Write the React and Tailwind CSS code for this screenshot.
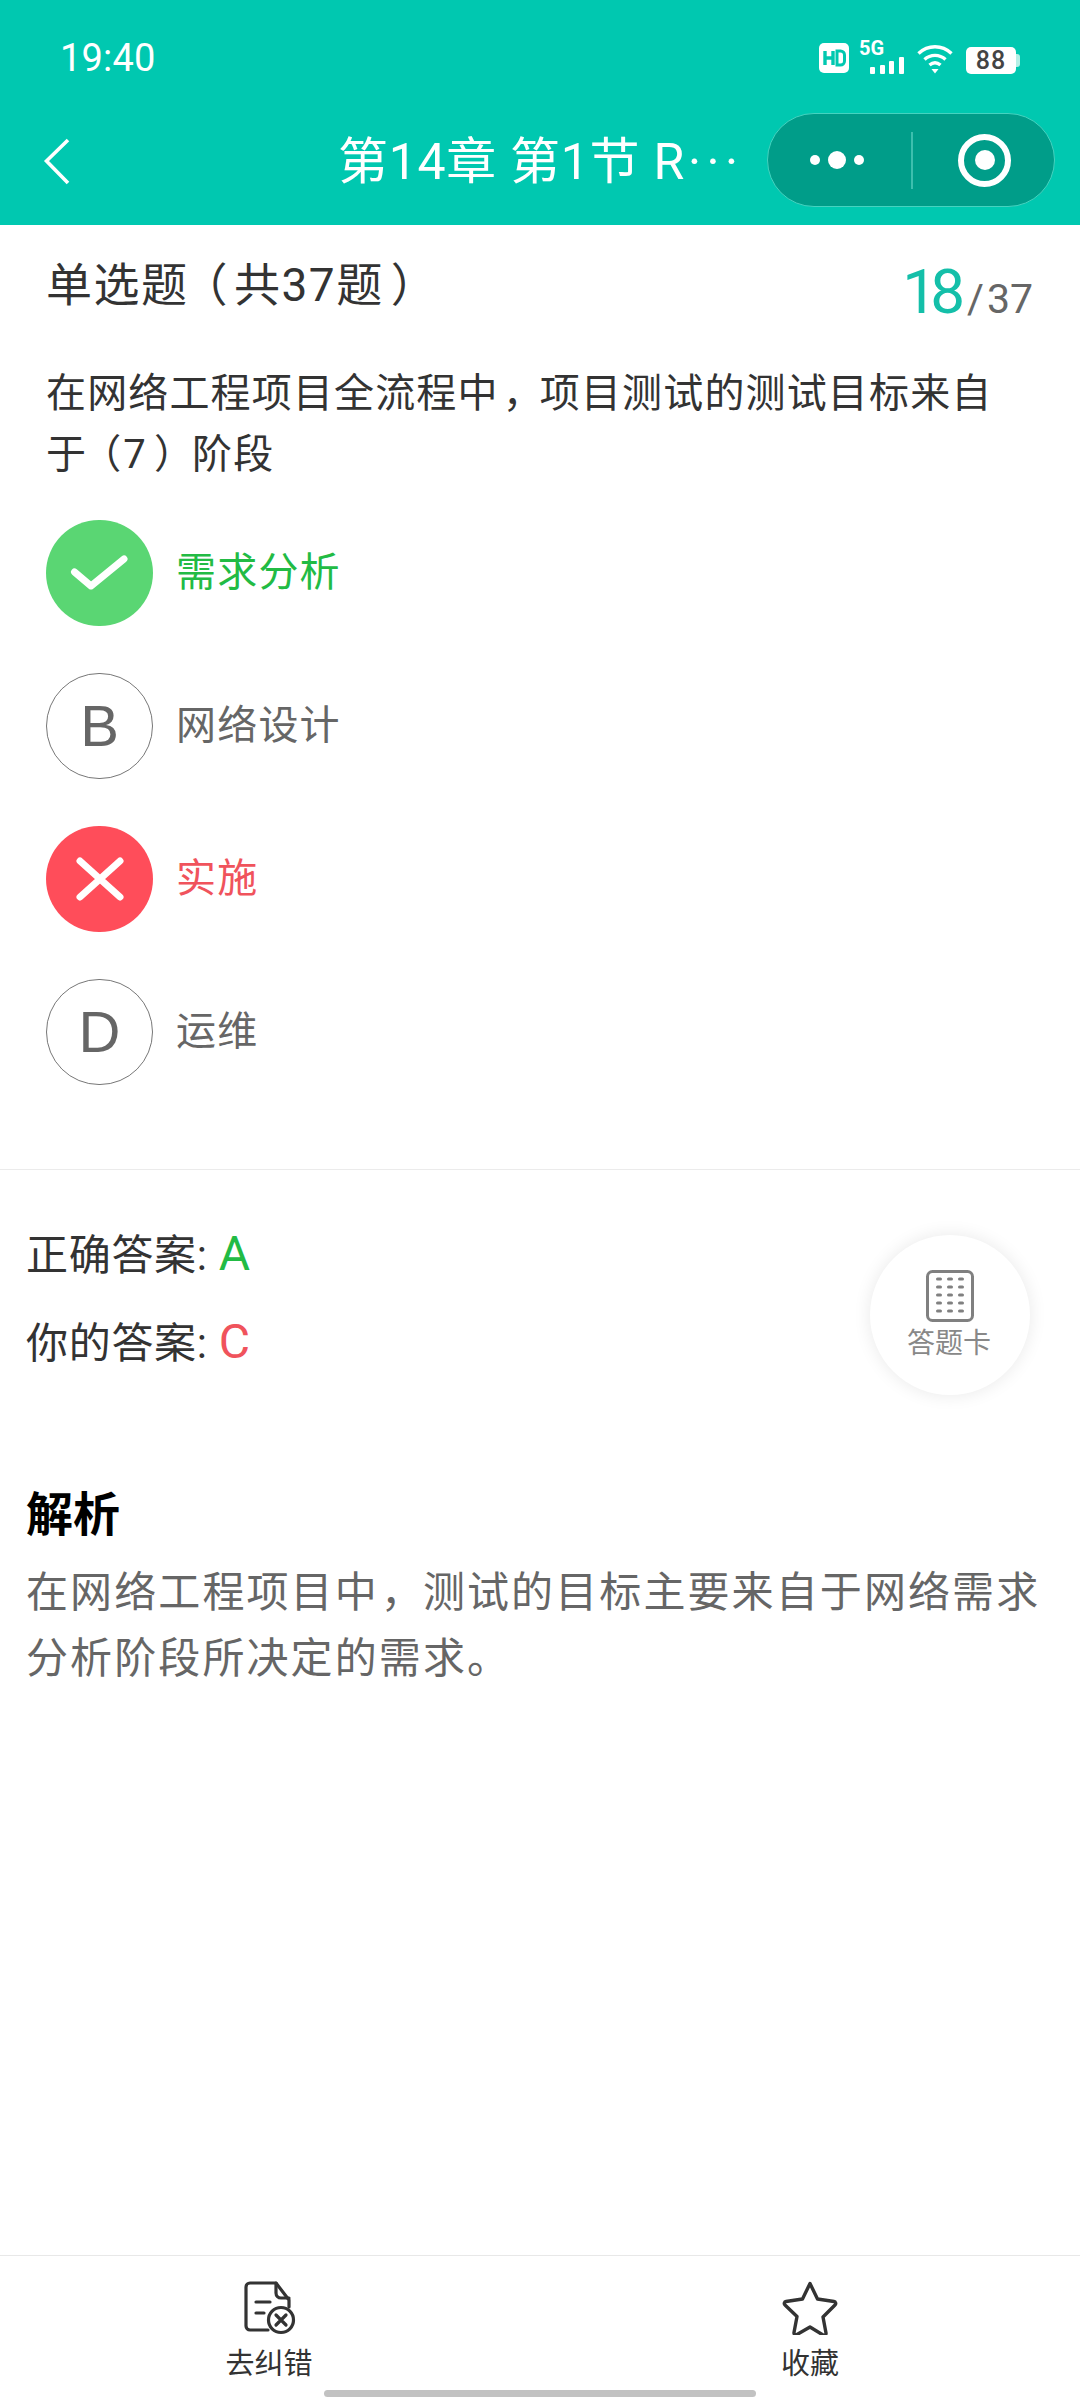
function Halt({ className, children }) {
  return <span className={`inline-block [font-feature-settings:'halt'] ${className}`}>{children}</span>;
}

function StatusIcons() {
  return (
    <div className="flex items-end gap-[6px] h-[32px] mr-[-1px]">
      <svg className="mr-[3px]" width="32" height="32" viewBox="0 0 32 32">
        <rect x="1" y="1" width="30" height="30" rx="5" fill="#fff" />
        <path d="M7 9v14M15 9v14M7 16h8" stroke="#00c8b0" strokeWidth="3.4" fill="none" />
        <path d="M19 9h3.5a4 4 0 0 1 4 4v6a4 4 0 0 1-4 4H19z" stroke="#00c8b0" strokeWidth="3" fill="none" />
      </svg>
      <div className="relative w-[46px] h-[32px]">
        <span className="absolute left-0 top-[-4px] text-[20px] leading-[20px] font-bold text-white">5G</span>
        <svg className="absolute left-[10px] bottom-0" width="36" height="17" viewBox="0 0 36 17">
          <rect x="1" y="10" width="5" height="7" rx="1" fill="#fff" />
          <rect x="11" y="8" width="5" height="9" rx="1" fill="#fff" />
          <rect x="20" y="4" width="5" height="13" rx="1" fill="#fff" />
          <rect x="30" y="0" width="5" height="17" rx="1" fill="#fff" />
        </svg>
      </div>
      <svg className="ml-[6px]" width="36" height="30" viewBox="0 0 36 30" fill="none" stroke="#fff" strokeWidth="3.4">
        <path d="M1.5 9.5C11 .5 25 .5 34.500 9.500" />
        <path d="M7.500 15.500C13.500 10 22.500 10 28.500 15.500" />
        <path d="M12.500 21C16 18 20 18 23.500 21" />
        <path d="M14.500 25h7L18 29.500z" fill="#fff" stroke="none" />
      </svg>
      <div className="flex items-center ml-[7px]">
        <div className="w-[50px] h-[27px] bg-white rounded-[5px] flex items-center justify-center text-[25px] leading-none font-medium text-[#444] tracking-[1px]">88</div>
        <div className="w-[4px] h-[13px] bg-[#b5f0e6] rounded-r-[3px]" />
      </div>
    </div>
  );
}

function Header() {
  return (
    <header className="bg-[#00c8b0] h-[225px] flex flex-col text-white">
      <div className="h-[113px] pl-[60px] pr-[61px] flex items-center justify-between pt-[3px]">
        <span className="text-[38px] leading-none font-normal tracking-[0.2px]">19:40</span>
        <StatusIcons />
      </div>
      <div className="flex items-start">
        <svg className="ml-[42px] mt-[24px] shrink-0" width="30" height="48" viewBox="0 0 30 48" fill="none" stroke="#fff" strokeWidth="3.600">
          <path d="M26 3 4.500 24 26 46" />
        </svg>
        <div className="ml-[266px] w-[408px] mt-[20px] text-[50px] leading-[58px] tracking-[0.700px] whitespace-nowrap">第14章 第1节 R<span className="tracking-[5.500px] ml-[3px]">···</span></div>
        <div className="ml-[21px] w-[288px] h-[94px] shrink-0 rounded-full bg-[#009d89] border border-[#45d3c0] flex items-center">
          <div className="w-[143px] flex items-center justify-center gap-[8px] pr-[5px]">
            <span className="w-[10px] h-[10px] rounded-full bg-white" />
            <span className="w-[18px] h-[18px] rounded-full bg-white" />
            <span className="w-[10px] h-[10px] rounded-full bg-white" />
          </div>
          <div className="w-[2px] h-[57px] bg-[#3dbfae]" />
          <div className="flex-1 flex items-center justify-center pl-[2px]">
            <div className="w-[53px] h-[53px] rounded-full border-[6px] border-white flex items-center justify-center">
              <span className="w-[20px] h-[20px] rounded-full bg-white" />
            </div>
          </div>
        </div>
      </div>
    </header>
  );
}

function Option({ kind, letter, text }) {
  const color = kind === 'ok' ? 'text-[#22bb44]' : kind === 'bad' ? 'text-[#f0535c]' : 'text-[#666666]';
  return (
    <div className="flex items-center h-[106px] gap-[23px]">
      {kind === 'ok' && (
        <div className="w-[107px] h-[106px] rounded-full bg-[#5ad673] flex items-center justify-center">
          <svg width="60" height="40" viewBox="0 0 60 40" fill="none" stroke="#fff" strokeWidth="7" strokeLinecap="round" strokeLinejoin="round">
            <path d="M4.500 19 21 33 54 6" />
          </svg>
        </div>
      )}
      {kind === 'bad' && (
        <div className="w-[107px] h-[106px] rounded-full bg-[#ff4d5a] flex items-center justify-center">
          <svg width="48" height="44" viewBox="0 0 48 44" fill="none" stroke="#fff" strokeWidth="7" strokeLinecap="round">
            <path d="M4 4 44 40M44 4 4 40" />
          </svg>
        </div>
      )}
      {kind === 'plain' && (
        <div className="w-[107px] h-[106px] rounded-full border border-[#777] flex items-center justify-center text-[58px] leading-none text-[#666] [font-family:'Liberation_Sans',sans-serif]">{letter}</div>
      )}
      <span className={`text-[40px] leading-[50px] tracking-[1.200px] ${color}`}>{text}</span>
    </div>
  );
}

export default function App() {
  return (
    <div className="relative w-[1080px] h-[2400px] bg-white flex flex-col overflow-hidden [font-family:Roboto,'Noto_Sans_CJK_SC','Noto_Sans',sans-serif]">
      <Header />
      <section className="px-[46px] h-[945px] border-b border-[#ebebeb] shrink-0">
        <div className="flex justify-between items-start pt-[33px]">
          <div className="text-[46px] leading-[54px] tracking-[1.500px] text-[#333]">单选题<Halt className="ml-[16px] mr-[5px]">（</Halt>共37题<Halt className="ml-[7px]">）</Halt></div>
          <div className="flex items-baseline mr-[1px] mt-[1px]">
            <span className="text-[62px] leading-[66px] tracking-[-7px] text-[#14bfa9]">18</span>
            <span className="text-[41px] leading-[66px] text-[#666] ml-[9px] mr-[3px]">/</span>
            <span className="text-[41px] leading-[66px] text-[#666]">37</span>
          </div>
        </div>
        <p className="mt-[31px] pr-[30px] text-[40px] leading-[61px] text-[#333] tracking-[1.150px]">在网络工程项目全流程中<Halt className="ml-[4px] mr-[16px]">，</Halt>项目测试的测试目标来自<br />于<Halt className="ml-[14px] mr-[1px]">（</Halt>7<Halt className="ml-[7px] mr-[17px]">）</Halt>阶段</p>
        <div className="mt-[35px] flex flex-col gap-[47px]">
          <Option kind="ok" text="需求分析" />
          <Option kind="plain" letter="B" text="网络设计" />
          <Option kind="bad" text="实施" />
          <Option kind="plain" letter="D" text="运维" />
        </div>
      </section>
      <section className="px-[26px] pt-[59px]">
        <div className="text-[42px] leading-[50px] tracking-[0.700px] text-[#333]">正确答案: <span className="text-[48px] text-[#22bb44]">A</span></div>
        <div className="mt-[36px] text-[42px] leading-[50px] tracking-[0.700px] text-[#333]">你的答案: <span className="text-[48px] text-[#f0535c]">C</span></div>
        <h2 className="mt-[118px] text-[47px] leading-[56px] font-bold text-black">解析</h2>
        <p className="mt-[17px] text-[42px] leading-[66px] text-[#666] tracking-[2.100px]">在网络工程项目中<Halt className="ml-[2px] mr-[19px]">，</Halt>测试的目标主要来自于网络需求<br />分析阶段所决定的需求。</p>
      </section>

      <div className="absolute left-[870px] top-[1235px] w-[160px] h-[160px] rounded-full bg-white shadow-[0_0_18px_rgba(0,0,0,0.09)] flex flex-col items-center justify-center">
        <svg width="48" height="52" viewBox="0 0 48 52" fill="none">
          <rect x="1.500" y="1.500" width="45" height="49" rx="5" stroke="#808080" strokeWidth="3" />
          {[9, 17, 25, 33, 41].map((y) => (
            <g key={y} fill="#808080">
              <rect x="10" y={y - 1.5} width="6" height="3" rx="1.500" />
              <rect x="21" y={y - 1.5} width="6" height="3" rx="1.500" />
              <rect x="32" y={y - 1.5} width="6" height="3" rx="1.500" />
            </g>
          ))}
        </svg>
        <span className="mt-[5px] mr-[2px] text-[28px] leading-[34px] text-[#888]">答题卡</span>
      </div>

      <footer className="absolute left-0 right-0 top-[2255px] h-[145px] border-t border-[#e8e8e8] flex">
        <div className="absolute left-0 right-0 top-[134px] flex justify-center">
          <div className="w-[432px] h-[7px] rounded-full bg-[#c2c2c2]" />
        </div>
        <div className="w-1/2 flex flex-col items-center pt-[25px]">
          <svg width="52" height="54" viewBox="0 0 52 54" fill="none" stroke="#333" strokeWidth="3.200" strokeLinecap="round" strokeLinejoin="round">
            <path d="M24 49H6a4 4 0 0 1-4-4V6a4 4 0 0 1 4-4h26l13 17v7" />
            <path d="M32 2v10a5 5 0 0 0 5 5h8" />
            <path d="M12 21h14M12 32h8" />
            <circle cx="37" cy="39" r="12.500" />
            <path d="m32 34 10 10M42 34 32 44" />
          </svg>
          <span className="mt-[10px] mr-[2px] text-[29px] leading-[38px] text-[#333]">去纠错</span>
        </div>
        <div className="w-1/2 flex flex-col items-center pt-[25px]">
          <svg width="56" height="54" viewBox="0 0 56 54" fill="none" stroke="#333" strokeWidth="3.400" strokeLinejoin="round">
            <path d="M28 2.500 35.500 18l16.500 2.500a2 2 0 0 1 1 3.500L41 36l3 16a2 2 0 0 1-3 2L28 46l-13 7.500a2 2 0 0 1-3-2l3-16L3 24a2 2 0 0 1 1-3.500L20.500 18z" />
          </svg>
          <span className="mt-[10px] text-[29px] leading-[38px] text-[#333]">收藏</span>
        </div>
      </footer>
    </div>
  );
}
